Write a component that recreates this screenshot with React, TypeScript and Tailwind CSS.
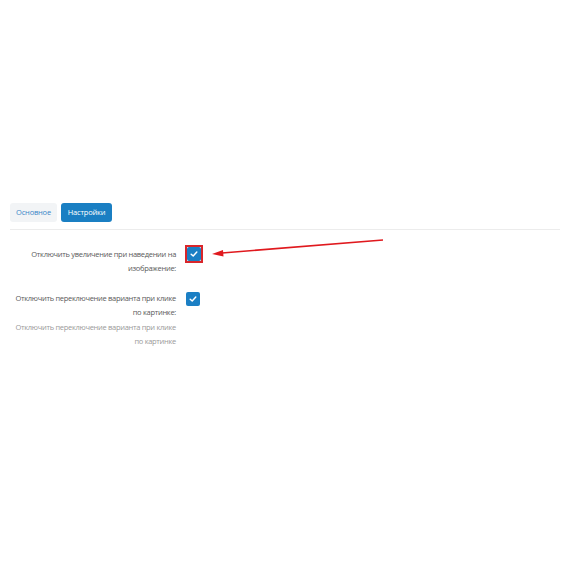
import React from "react";

function Check({ highlight }: { highlight?: boolean }) {
  const box = (
    <span className="flex h-[14px] w-[14px] items-center justify-center rounded-[2px] bg-[#1b7fc4]">
      <svg width="8" height="8" viewBox="0 0 10 10" fill="none">
        <path d="M1.5 5.2 L4 7.5 L8.5 2.5" stroke="#fff" strokeWidth="1.8" strokeLinecap="round" strokeLinejoin="round" />
      </svg>
    </span>
  );
  if (!highlight) return <div className="pt-[1px]">{box}</div>;
  return (
    <div className="-ml-[1px] -mt-[2px] flex h-[18px] w-[18px] items-center justify-center border-2 border-[#d9262b]">
      {box}
    </div>
  );
}

function Row({ lines, desc, highlight }: { lines: string[]; desc?: string[]; highlight?: boolean }) {
  return (
    <div className="flex gap-[10px]">
      <div className="w-[166px] shrink-0 whitespace-nowrap text-right tracking-[-0.3px]">
        <div className="text-[7.5px] leading-[14px] text-[#5a5a5a]">
          {lines.map((l) => (
            <div key={l}>{l}</div>
          ))}
        </div>
        {desc && (
          <div className="mt-[1px] text-[7.5px] leading-[14px] text-[#9a9a9a]">
            {desc.map((l) => (
              <div key={l}>{l}</div>
            ))}
          </div>
        )}
      </div>
      <Check highlight={highlight} />
    </div>
  );
}

export default function App() {
  return (
    <div
      className="relative h-[570px] w-[570px] bg-white pt-[203px]"
      style={{ fontFamily: '"Open Sans", "Liberation Sans", sans-serif' }}
    >
      <div className="px-[10px]">
        <div className="flex gap-[4px] tracking-[-0.2px]">
          <button className="h-[19px] w-[47px] rounded-[3px] bg-[#f2f4f6] text-[7.5px] text-[#3a86c8]">Основное</button>
          <button className="h-[19px] w-[51px] rounded-[3px] bg-[#1a7fc3] text-[7.5px] text-white">Настройки</button>
        </div>
        <div className="mt-[7px] h-px bg-[#ececec]" />
        <div className="mt-[17px] flex flex-col gap-[16px]">
          <Row lines={["Отключить увеличение при наведении на", "изображение:"]} highlight />
          <Row
            lines={["Отключить переключение варианта при клике", "по картинке:"]}
            desc={["Отключить переключение варианта при клике", "по картинке"]}
          />
        </div>
      </div>
      <svg className="absolute left-0 top-0" width="570" height="570" viewBox="0 0 570 570">
        <line x1="383" y1="240" x2="222" y2="253" stroke="#e0191e" strokeWidth="1.6" />
        <path d="M212 254 L223 250 L223.5 256.5 Z" fill="#e0191e" />
      </svg>
    </div>
  );
}
